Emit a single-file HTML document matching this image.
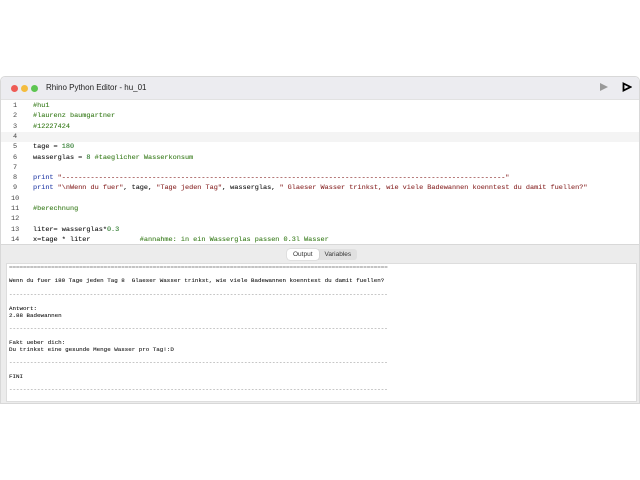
<!DOCTYPE html>
<html><head><style>
*{margin:0;padding:0;box-sizing:border-box}
body{width:640px;height:480px;background:#fff;position:relative;overflow:hidden;font-family:"Liberation Sans",sans-serif}
.win{position:absolute;left:0;top:76px;width:640px;height:328px;background:#fff;border:1px solid #d8d8d8;border-radius:5px 5px 0 0;overflow:hidden}
.title{position:absolute;left:0;top:0;width:640px;height:23px;background:#ececf0;border-bottom:1px solid #e2e2e2}
.dot{position:absolute;top:8px;width:7px;height:7px;border-radius:50%}
.ttl{position:absolute;left:45px;top:6px;font-size:8px;color:#222}
.code{position:absolute;top:24px;left:0;width:640px;font-family:"Liberation Mono",monospace;font-size:6.85px}
.ln{position:absolute;height:10.3px;line-height:10.3px;white-space:pre;width:640px}
.ln .n{position:absolute;left:12px;color:#444}
.ln .t{position:absolute;left:32px;color:#111;-webkit-text-stroke:0.1px currentColor}
.ln .c,.c{color:#3a7d1e}.s{color:#8b2b2b}.k{color:#2a40a8}.num{color:#2c7a2c}
.panel{position:absolute;left:0;top:167px;width:640px;height:161px;background:#ececec;border-top:1px solid #d8d8d8}
.tabs{position:absolute;left:286px;top:4px;height:11px;background:#e0e0e0;border-radius:3px;font-size:6.5px;display:flex}
.tabs div{padding:0 6px;line-height:11px;color:#333}
.tabs .a{background:#fff;border-radius:3px;box-shadow:0 0 1px #999}
.out{position:absolute;left:5px;top:18px;width:631px;height:139px;background:#fff;border:1px solid #ddd;font-family:"Liberation Mono",monospace;font-size:5.85px;color:#111}
.o{position:absolute;left:2px;white-space:pre;line-height:7px;-webkit-text-stroke:0.08px currentColor}
.d{color:#888}
</style></head><body>
<div class="win">
<div class="title">
<div class="dot" style="left:10px;background:#ee5b55"></div>
<div class="dot" style="left:20px;background:#f4bc3e"></div>
<div class="dot" style="left:30px;background:#5dc551"></div>
<div class="ttl">Rhino Python Editor - hu_01</div>
<svg style="position:absolute;left:598px;top:5px" width="10" height="10"><path d="M1 1L9 5L1 9Z" fill="#999"/></svg>
<svg style="position:absolute;left:621px;top:5px" width="10" height="10"><path d="M1.5 1.5L8.5 5L1.5 8.5Z" fill="none" stroke="#000" stroke-width="1.8"/></svg>
</div>
<div class="code">
<div class="ln" style="top:0"><span class="n">1</span><span class="t c">#hu1</span></div>
<div class="ln" style="top:10.3px"><span class="n">2</span><span class="t c">#laurenz baumgartner</span></div>
<div class="ln" style="top:20.6px"><span class="n">3</span><span class="t c">#12227424</span></div>
<div class="ln" style="top:30.9px;background:#f4f4f4"><span class="n">4</span></div>
<div class="ln" style="top:41.2px"><span class="n">5</span><span class="t">tage = <span class="num">180</span></span></div>
<div class="ln" style="top:51.5px"><span class="n">6</span><span class="t">wasserglas = <span class="num">8</span> <span class="c">#taeglicher Wasserkonsum</span></span></div>
<div class="ln" style="top:61.8px"><span class="n">7</span></div>
<div class="ln" style="top:72.1px"><span class="n">8</span><span class="t"><span class="k">print</span> <span class="s">"------------------------------------------------------------------------------------------------------------"</span></span></div>
<div class="ln" style="top:82.4px"><span class="n">9</span><span class="t"><span class="k">print</span> <span class="s">"\nWenn du fuer"</span>, tage, <span class="s">"Tage jeden Tag"</span>, wasserglas, <span class="s">" Glaeser Wasser trinkst, wie viele Badewannen koenntest du damit fuellen?"</span></span></div>
<div class="ln" style="top:92.7px"><span class="n" style="left:10px">10</span></div>
<div class="ln" style="top:103px"><span class="n" style="left:10px">11</span><span class="t c">#berechnung</span></div>
<div class="ln" style="top:113.3px"><span class="n" style="left:10px">12</span></div>
<div class="ln" style="top:123.6px"><span class="n" style="left:10px">13</span><span class="t">liter= wasserglas*<span class="num">0.3</span></span></div>
<div class="ln" style="top:133.9px"><span class="n" style="left:10px">14</span><span class="t">x=tage * liter            <span class="c">#annahme: in ein Wasserglas passen 0.3l Wasser</span></span></div>
</div>
<div class="panel">
<div class="tabs"><div class="a">Output</div><div>Variables</div></div>
<div class="out">
<div class="o d" style="top:0">============================================================================================================</div>
<div class="o" style="top:13px">Wenn du fuer 180 Tage jeden Tag 8  Glaeser Wasser trinkst, wie viele Badewannen koenntest du damit fuellen?</div>
<div class="o d" style="top:27px">------------------------------------------------------------------------------------------------------------</div>
<div class="o" style="top:41px">Antwort:</div>
<div class="o" style="top:48px">2.88 Badewannen</div>
<div class="o d" style="top:61px">------------------------------------------------------------------------------------------------------------</div>
<div class="o" style="top:75px">Fakt ueber dich:</div>
<div class="o" style="top:82px">Du trinkst eine gesunde Menge Wasser pro Tag!:D</div>
<div class="o d" style="top:95px">------------------------------------------------------------------------------------------------------------</div>
<div class="o" style="top:109px">FINI</div>
<div class="o d" style="top:122px">------------------------------------------------------------------------------------------------------------</div>
</div>
</div>
</div>
</body></html>
